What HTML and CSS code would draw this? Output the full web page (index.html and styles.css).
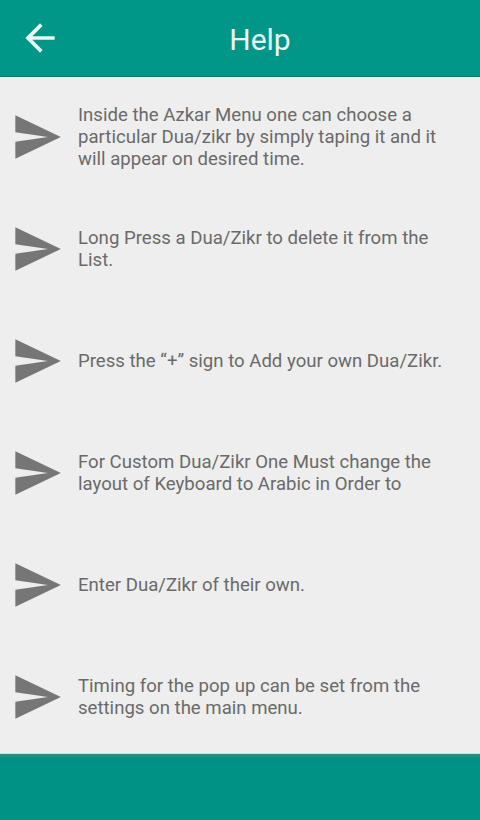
FILE: index.html
```html
<!DOCTYPE html>
<html lang="en">
<head>
    <meta charset="UTF-8">
    <meta name="viewport" content="width=device-width, initial-scale=1.0">
    <title>Help</title>
    <link rel="stylesheet" href="styles.css">
</head>
<body>
    <div class="app">
        <!-- Toolbar -->
        <div class="toolbar">
            <button class="back-btn" aria-label="Back">
                <svg viewBox="0 0 24 24" width="44" height="44">
                    <path d="M20 11H7.83l5.59-5.59L12 4l-8 8 8 8 1.41-1.41L7.83 13H20v-2z" fill="#e8f6f4"/>
                </svg>
            </button>
            <h1 class="title">Help</h1>
        </div>

        <!-- Help tips -->
        <ul class="help-list">
            <li class="help-item">
                <svg class="send-icon" viewBox="0 0 24 24" preserveAspectRatio="none"><path d="M2.01 21L23 12 2.01 3 2 10l15 2-15 2z"/></svg>
                <p class="help-text">Inside the Azkar Menu one can choose a particular Dua/zikr by simply taping it and it will appear on desired time.</p>
            </li>
            <li class="help-item">
                <svg class="send-icon" viewBox="0 0 24 24" preserveAspectRatio="none"><path d="M2.01 21L23 12 2.01 3 2 10l15 2-15 2z"/></svg>
                <p class="help-text">Long Press a Dua/Zikr to delete it from the List.</p>
            </li>
            <li class="help-item">
                <svg class="send-icon" viewBox="0 0 24 24" preserveAspectRatio="none"><path d="M2.01 21L23 12 2.01 3 2 10l15 2-15 2z"/></svg>
                <p class="help-text">Press the “+” sign to Add your own Dua/Zikr.</p>
            </li>
            <li class="help-item">
                <svg class="send-icon" viewBox="0 0 24 24" preserveAspectRatio="none"><path d="M2.01 21L23 12 2.01 3 2 10l15 2-15 2z"/></svg>
                <p class="help-text">For Custom Dua/Zikr One Must change the layout of Keyboard to Arabic in Order to</p>
            </li>
            <li class="help-item">
                <svg class="send-icon" viewBox="0 0 24 24" preserveAspectRatio="none"><path d="M2.01 21L23 12 2.01 3 2 10l15 2-15 2z"/></svg>
                <p class="help-text">Enter Dua/Zikr of their own.</p>
            </li>
            <li class="help-item">
                <svg class="send-icon" viewBox="0 0 24 24" preserveAspectRatio="none"><path d="M2.01 21L23 12 2.01 3 2 10l15 2-15 2z"/></svg>
                <p class="help-text">Timing for the pop up can be set from the settings on the main menu.</p>
            </li>
        </ul>

        <!-- Bottom bar -->
        <div class="bottom-bar"></div>
    </div>
</body>
</html>
```

FILE: styles.css
```css
/* Help screen */
body {
    font-family: Roboto, 'Noto Sans', sans-serif;
    margin: 0;
    padding: 0;
    background-color: #eeeeee;
}
.app {
    height: 820px;
    display: flex;
    flex-direction: column;
}
.toolbar {
    height: 77px;
    background-color: #009688;
    border-bottom: 1px solid #00806f;
    display: flex;
    align-items: center;
    box-sizing: border-box;
}
.back-btn {
    background: none;
    border: none;
    padding: 0;
    margin-left: 18px;
    width: 44px;
    height: 44px;
    display: flex;
}
.title {
    flex: 1;
    margin: 2px 0 0 0;
    padding-right: 22px;
    text-align: center;
    color: #eaf7f5;
    font-size: 30px;
    font-weight: 400;
}
.help-list {
    flex: 1;
    list-style: none;
    margin: 0;
    padding: 4px 0 0 0;
    display: flex;
    flex-direction: column;
}
.help-item {
    flex: 1;
    display: flex;
    align-items: center;
    padding: 0 18px 0 11px;
}
.send-icon {
    width: 52px;
    height: 58px;
    flex-shrink: 0;
    fill: #767676;
    margin-right: 15px;
}
.help-text {
    margin: 0;
    font-size: 18.6px;
    line-height: 22px;
    color: #6a6a6a;
}
.bottom-bar {
    height: 67px;
    background-color: #009385;
    border-top: 1px solid #a8f0ea;
    box-shadow: inset 0 3px 0 #2f8a80;
    box-sizing: border-box;
}
```
